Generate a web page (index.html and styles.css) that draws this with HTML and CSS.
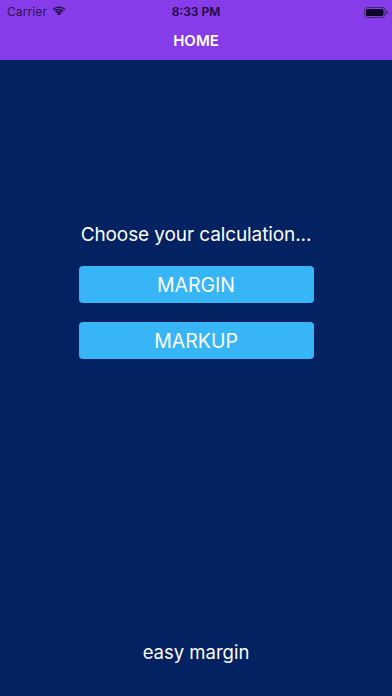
FILE: index.html
```html
<!DOCTYPE html>
<html>
<head>
<meta charset="utf-8">
<link rel="stylesheet" href="styles.css">
</head>
<body>
<div class="app">
  <header class="top">
    <div class="status">
      <div class="left">
        <span class="carrier">Carrier</span>
        <svg class="wifi" width="14" height="10" viewBox="0 0 14 10">
          <path d="M7 9.6 L4.9 7.4 A3 3 0 0 1 9.1 7.4 Z" fill="#1a0a3a"/>
          <path d="M3.6 6.1 A4.9 4.9 0 0 1 10.4 6.1 L9.5 7.0 A3.6 3.6 0 0 0 4.5 7.0 Z" fill="#1a0a3a"/>
          <path d="M2.2 4.7 A6.9 6.9 0 0 1 11.8 4.7 L10.9 5.6 A5.6 5.6 0 0 0 3.1 5.6 Z" fill="#1a0a3a"/>
          <path d="M0.6 3.1 A9.2 9.2 0 0 1 13.4 3.1 L12.5 4.0 A7.9 7.9 0 0 0 1.5 4.0 Z" fill="#1a0a3a"/>
        </svg>
      </div>
      <span class="time">8:33 PM</span>
      <div class="right">
        <svg width="24" height="11" viewBox="0 0 24 11">
          <rect x="0.5" y="0.5" width="20.5" height="10" rx="3" fill="none" stroke="#3a2a6a" stroke-width="1"/>
          <rect x="2" y="2" width="17.5" height="7" rx="1.6" fill="#0d0428"/>
          <path d="M22 3.8 A1.6 1.6 0 0 1 22 7.2 Z" fill="#3a2a6a"/>
        </svg>
      </div>
    </div>
    <div class="nav">HOME</div>
  </header>
  <main class="content">
    <div class="center">
      <p class="prompt">Choose your calculation...</p>
      <button class="btn">MARGIN</button>
      <button class="btn">MARKUP</button>
    </div>
    <p class="footer">easy margin</p>
  </main>
</div>
</body>
</html>
```
FILE: styles.css
```css
* { box-sizing: border-box; }
html, body { margin: 0; padding: 0; }
body {
  width: 392px;
  height: 696px;
  overflow: hidden;
  font-family: "Inter", "Liberation Sans", sans-serif;
  background: #022262;
}
.app {
  display: flex;
  flex-direction: column;
  height: 696px;
}
.top {
  background: #873ce9;
  height: 60px;
  display: flex;
  flex-direction: column;
}
.status {
  height: 21px;
  display: flex;
  align-items: center;
  justify-content: space-between;
  padding: 2px 4px 0 7px;
  position: relative;
}
.left { display: flex; align-items: center; gap: 5px; width: 80px; }
.carrier { font-size: 12px; color: #2a1450; letter-spacing: 0.1px; }
.wifi { margin-top: -1px; }
.time {
  font-size: 12px;
  font-weight: 600;
  color: #1c0a3c;
  position: absolute;
  left: 0; right: 0;
  text-align: center;
  top: 4px;
}
.right { width: 80px; display: flex; justify-content: flex-end; padding-right: 0; padding-top: 1px; }
.nav {
  flex: 1;
  display: flex;
  align-items: center;
  justify-content: center;
  color: #ffffff;
  font-size: 15px;
  font-weight: 600;
  padding-bottom: 1px;
}
.content {
  flex: 1;
  display: flex;
  flex-direction: column;
  align-items: center;
}
.center {
  display: flex;
  flex-direction: column;
  align-items: center;
  margin-top: 163px;
}
.prompt {
  margin: 0 0 19px;
  color: #ffffff;
  font-size: 19px;
  line-height: 24px;
  letter-spacing: -0.1px;
}
.btn {
  width: 235px;
  height: 37px;
  border: none;
  border-radius: 4px;
  background: #37b5f7;
  color: #ffffff;
  font-family: inherit;
  font-size: 19.5px;
  font-weight: 400;
  margin-bottom: 19px;
  padding: 0;
}
.footer {
  margin: auto 0 32px;
  color: #ffffff;
  font-size: 18.5px;
  line-height: 24px;
}
```
